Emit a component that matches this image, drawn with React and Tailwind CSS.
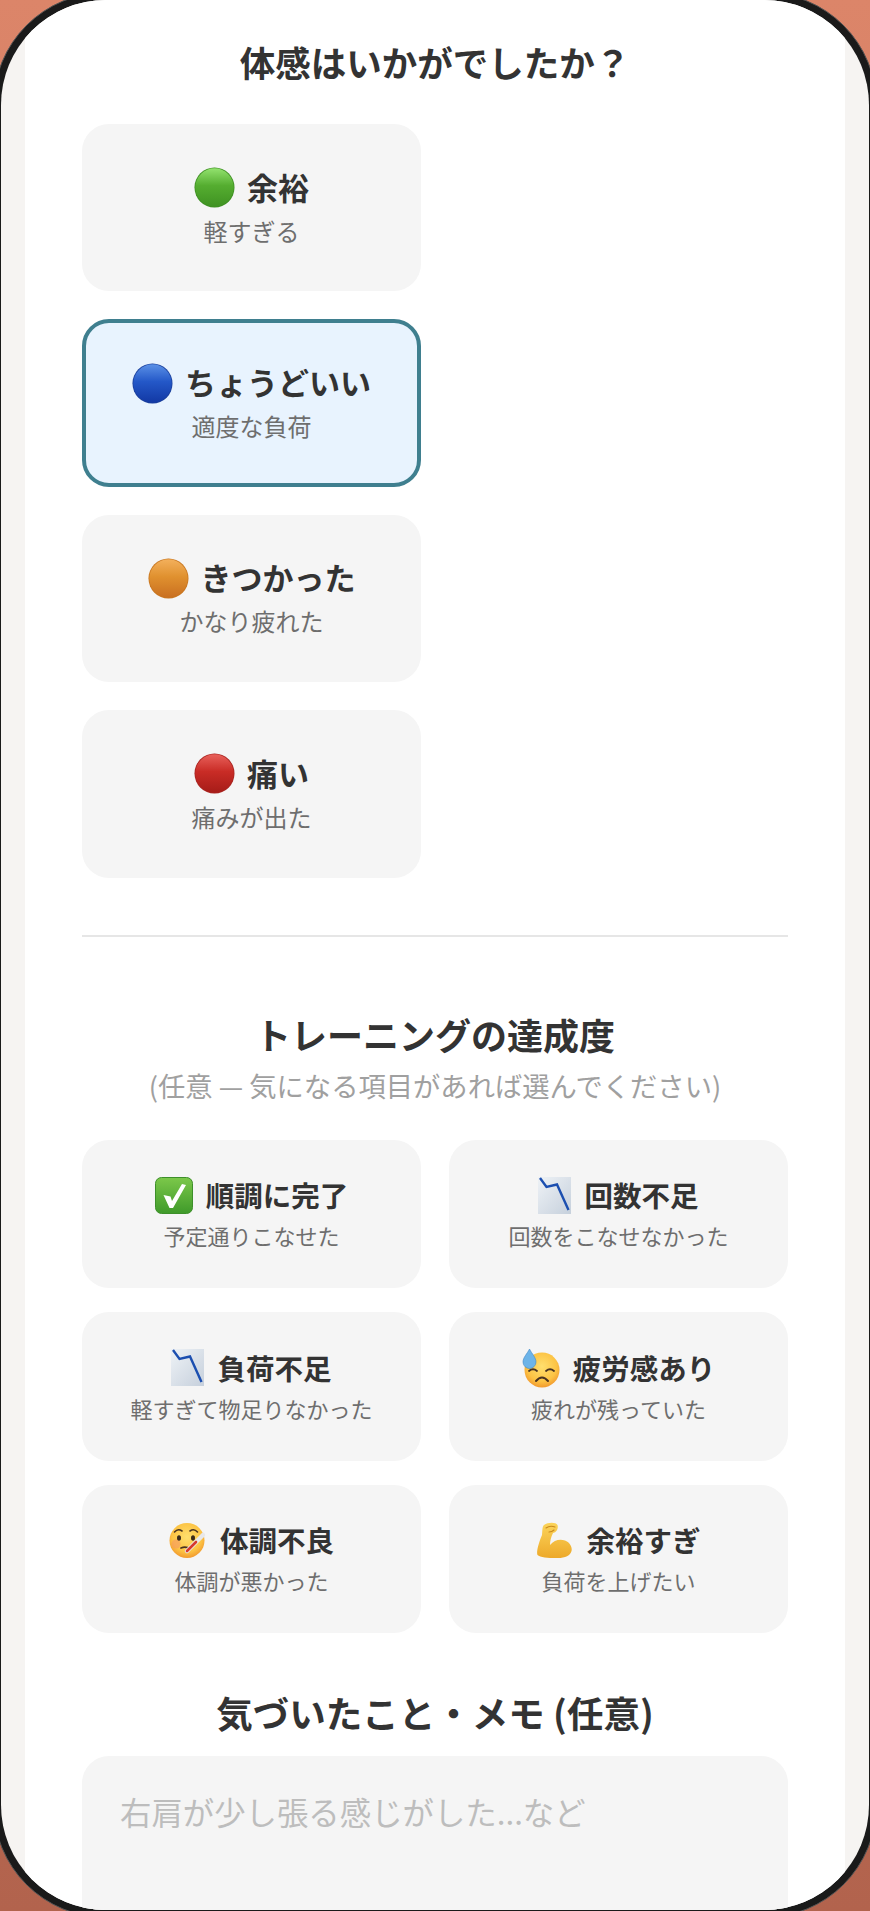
const Ball = ({ id, top, mid, bottom, edge }) => (
  <svg width="41" height="41" viewBox="0 0 41 41" className="shrink-0">
    <defs>
      <linearGradient id={id} x1="0" y1="0" x2="0" y2="1">
        <stop offset="0" stopColor={top} />
        <stop offset="0.45" stopColor={mid} />
        <stop offset="1" stopColor={bottom} />
      </linearGradient>
    </defs>
    <circle cx="20.5" cy="20.5" r="20" fill={edge} />
    <circle cx="20.5" cy="20.5" r="19.2" fill={`url(#${id})`} />
  </svg>
);

const CheckBox = () => (
  <svg width="38" height="37" viewBox="0 0 38 37" className="shrink-0">
    <defs>
      <linearGradient id="chk" x1="0" y1="0" x2="0" y2="1">
        <stop offset="0" stopColor="#7cc84a" />
        <stop offset="1" stopColor="#3f9a2a" />
      </linearGradient>
    </defs>
    <rect x="0.5" y="0.5" width="37" height="36" rx="6" fill="url(#chk)" stroke="#3d8f2a" />
    <path d="M8.5 18 L15.5 19.5 L17 24 L27 7 L31 8 L18 31 L14.5 31 Z" fill="#fff" />
  </svg>
);

const ChartDown = ({ id }) => (
  <svg width="33" height="37" viewBox="0 0 33 37" className="shrink-0">
    <defs>
      <linearGradient id={id} x1="0" y1="0" x2="1" y2="1">
        <stop offset="0" stopColor="#eef2f6" />
        <stop offset="1" stopColor="#c6d0dc" />
      </linearGradient>
    </defs>
    <rect width="33" height="37" fill={`url(#${id})`} />
    <path d="M2 1 L8.5 10 L19 7.5 L30.5 33" fill="none" stroke="#1c4fb0" strokeWidth="2.4" />
  </svg>
);

const FaceGradient = ({ id }) => (
  <radialGradient id={id} cx="0.5" cy="0.4" r="0.6">
    <stop offset="0" stopColor="#ffdf6e" />
    <stop offset="0.7" stopColor="#fcc344" />
    <stop offset="1" stopColor="#f29a2e" />
  </radialGradient>
);

const SweatFace = () => (
  <svg width="38" height="40" viewBox="0 0 38 40" className="shrink-0">
    <defs>
      <FaceGradient id="sweat" />
    </defs>
    <circle cx="20" cy="22" r="17.5" fill="url(#sweat)" />
    <path d="M7 23 Q11 19.5 15 23 M24 23 Q28 19.5 32 23" fill="none" stroke="#4a3320" strokeWidth="1.8" strokeLinecap="round" />
    <path d="M14 33 Q20 26 26 33" fill="none" stroke="#4a3320" strokeWidth="2" strokeLinecap="round" />
    <path d="M7.5 1 C10 6 14 9.5 14 14 A6.3 6.3 0 0 1 1 14 C1 9.5 5 6 7.5 1 Z" fill="#6db4e8" stroke="#3f86c4" strokeWidth="0.6" />
  </svg>
);

const SickFace = () => (
  <svg width="38" height="37" viewBox="0 0 38 37" className="shrink-0">
    <defs>
      <FaceGradient id="sick" />
    </defs>
    <circle cx="18" cy="18.5" r="17.5" fill="url(#sick)" />
    <circle cx="7" cy="22" r="4.5" fill="#f59a62" opacity="0.6" />
    <path d="M5.5 10 Q9 6 13 9 M21 9 Q25 6 28.5 10" fill="none" stroke="#4a3320" strokeWidth="1.6" strokeLinecap="round" />
    <ellipse cx="10" cy="16" rx="2" ry="2.8" fill="#3a2a1a" />
    <ellipse cx="24" cy="16" rx="2" ry="2.8" fill="#3a2a1a" />
    <path d="M12 26 Q17 24 21 27" fill="none" stroke="#4a3320" strokeWidth="1.8" strokeLinecap="round" />
    <path d="M18 29 L34 13" stroke="#e8e8ea" strokeWidth="4.5" strokeLinecap="round" />
    <path d="M18 29 L27 20" stroke="#d8392c" strokeWidth="2.6" strokeLinecap="round" />
  </svg>
);

const Muscle = () => (
  <svg width="37" height="37" viewBox="0 0 37 37" className="shrink-0">
    <defs>
      <linearGradient id="arm" x1="0" y1="0" x2="0" y2="1">
        <stop offset="0" stopColor="#fbd45a" />
        <stop offset="1" stopColor="#eda92a" />
      </linearGradient>
    </defs>
    <path d="M8 3 C12 0 20 0 21.5 3 C22.5 6 21 10 17 11 C15 15 14 19 14 23 C18 18 24 16.5 29 18.5 C34 20.5 36.5 25 35.5 29 C34.5 34 28 36.5 20 36 C12 36 4 35.5 1.5 33 C0 30 3 20 6 13 C6.5 9 6 5 8 3 Z" fill="url(#arm)" />
    <path d="M10 6 Q14 3 19 5 M13 10 Q16 10 18 8" fill="none" stroke="#c98a1e" strokeWidth="1.1" strokeLinecap="round" />
  </svg>
);

const feelings = [
  { label: "余裕", sub: "軽すぎる", icon: <Ball id="green" top="#92e26e" mid="#55ad30" bottom="#3f9222" edge="#3d8f22" /> },
  { label: "ちょうどいい", sub: "適度な負荷", selected: true, icon: <Ball id="blue" top="#5a90e6" mid="#2458c8" bottom="#1238a4" edge="#1a3f9c" /> },
  { label: "きつかった", sub: "かなり疲れた", icon: <Ball id="orange" top="#f3b05c" mid="#e0912f" bottom="#c96f20" edge="#c8761f" /> },
  { label: "痛い", sub: "痛みが出た", icon: <Ball id="red" top="#e8605a" mid="#c92c26" bottom="#a61c18" edge="#a92420" /> },
];

const results = [
  { label: "順調に完了", sub: "予定通りこなせた", icon: <CheckBox /> },
  { label: "回数不足", sub: "回数をこなせなかった", icon: <ChartDown id="chart1" /> },
  { label: "負荷不足", sub: "軽すぎて物足りなかった", icon: <ChartDown id="chart2" /> },
  { label: "疲労感あり", sub: "疲れが残っていた", icon: <SweatFace /> },
  { label: "体調不良", sub: "体調が悪かった", icon: <SickFace /> },
  { label: "余裕すぎ", sub: "負荷を上げたい", icon: <Muscle /> },
];

const App = () => {
  return (
    <div className="h-[1911px] w-[870px] overflow-hidden bg-gradient-to-b from-[#dc8569] to-[#b2634d] font-['Noto_Sans_CJK_JP','Noto_Sans',sans-serif] text-[#333333]">
      <div className="-mx-[7px] -mt-[8px] h-[1926px] w-[884px] rounded-[113px] border border-[#555555] bg-[#1a1a1a] p-[7px]">
        <div className="h-full overflow-hidden rounded-[105px] bg-[#f6f4f2]">
          <div className="mx-[24px] h-full bg-white px-[57px] pt-[38px]">
            <h2 className="text-center text-[35.5px] font-semibold leading-[48px]">体感はいかがでしたか？</h2>

            <div className="mt-[38px] grid grid-cols-2 gap-[28px]">
              {feelings.map((f) => (
                <button
                  key={f.label}
                  type="button"
                  className={
                    f.selected
                      ? "col-start-1 flex h-[167.4px] flex-col items-center justify-center rounded-[27px] border-4 border-[#3f7f8f] bg-[#e8f3fe]"
                      : "col-start-1 flex h-[167.4px] flex-col items-center justify-center rounded-[27px] bg-[#f5f5f5]"
                  }
                >
                  <span className="flex h-[42px] items-center gap-[12px] text-[31px] font-semibold leading-[38px]">
                    {f.icon}
                    <span className="pb-[2px]">{f.label}</span>
                  </span>
                  <span className="mt-[4px] text-[24px] leading-[36px] text-[#6e6e6e]">{f.sub}</span>
                </button>
              ))}
            </div>

            <div className="mt-[57px] h-[2px] bg-[#e6e6e6]" />

            <h2 className="mt-[73px] text-center text-[36px] font-semibold leading-[48px]">トレーニングの達成度</h2>
            <p className="mt-[9px] text-center text-[27.3px] leading-[36px] text-[#a0a0a0]">(任意 — 気になる項目があれば選んでください)</p>

            <div className="mt-[37px] grid grid-cols-2 gap-x-[28px] gap-y-[24px]">
              {results.map((r) => (
                <button
                  key={r.label}
                  type="button"
                  className="flex h-[148.5px] flex-col items-center justify-center rounded-[27px] bg-[#f5f5f5] pt-[1px]"
                >
                  <span className="flex h-[38px] items-center gap-[13px] text-[28.5px] font-semibold leading-[36px]">
                    {r.icon}
                    {r.label}
                  </span>
                  <span className="mt-[4px] text-[22px] leading-[34px] text-[#6e6e6e]">{r.sub}</span>
                </button>
              ))}
            </div>

            <h2 className="mt-[55.5px] text-center text-[36.5px] font-semibold leading-[48px]">気づいたこと・メモ (任意)</h2>
            <textarea
              className="mt-[19px] block h-[220px] w-full resize-none rounded-[27px] bg-[#f5f5f5] px-[38px] py-[35px] text-[31.4px] leading-[42px] outline-none placeholder:text-[#bdbdbd]"
              placeholder="右肩が少し張る感じがした...など"
            />
          </div>
        </div>
      </div>
    </div>
  );
};

export default App;
